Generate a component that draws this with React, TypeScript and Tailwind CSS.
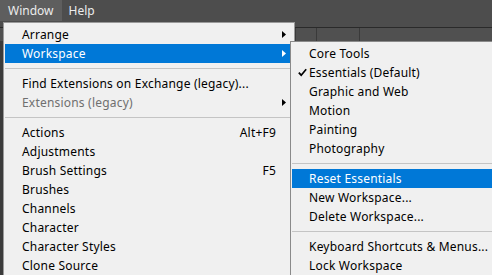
import React from "react";

type ItemProps = {
  label: string;
  shortcut?: string;
  arrow?: boolean;
  disabled?: boolean;
  active?: boolean;
  check?: boolean;
};

function Arrow({ white }: { white?: boolean }) {
  return (
    <svg width="4" height="7" viewBox="0 0 4 7" className="block">
      <path d="M0 0 L4 3.5 L0 7 Z" fill={white ? "#ffffff" : "#000000"} />
    </svg>
  );
}

function Check() {
  return (
    <svg width="9" height="9" viewBox="0 0 9 9" className="absolute left-[6px] top-[5px]">
      <path d="M0.8 4.6 L3.2 7.2 L8.2 1.2" stroke="#000" strokeWidth="1.7" fill="none" />
    </svg>
  );
}

function MainItem({ label, shortcut, arrow, disabled, active }: ItemProps) {
  return (
    <div
      className={
        "flex items-center h-[19px] pl-[17px] pr-[7px] " +
        (active ? "bg-[#0078d7] text-white" : disabled ? "text-[#6f6f6f]" : "text-black")
      }
    >
      <span className="flex-1 whitespace-nowrap pt-px">{label}</span>
      {shortcut && <span className="whitespace-nowrap pt-px">{shortcut}</span>}
      <span className="w-[10px] flex justify-end">{arrow && <Arrow white={active} />}</span>
    </div>
  );
}

function SubItem({ label, active, check }: ItemProps) {
  return (
    <div
      className={
        "relative flex items-center h-[19px] pl-[17px] " +
        (active ? "bg-[#0078d7] text-white" : "text-black")
      }
    >
      {check && <Check />}
      <span className="whitespace-nowrap pt-px">{label}</span>
    </div>
  );
}

function Sep() {
  return (
    <div className="h-[11px] flex items-center">
      <div className="h-px w-full bg-[#c4c4c4]" />
    </div>
  );
}

export default function App() {
  return (
    <div
      className="relative w-[492px] h-[275px] overflow-hidden bg-[#3b3b3b] text-[12px] leading-none tracking-[0.2px]"
      style={{ fontFamily: '"Noto Sans", "Noto Sans CJK KR", sans-serif' }}
    >
      {/* Menu bar */}
      <div className="h-[27px] bg-[#4d4d4d] flex items-start text-[#ececec] tracking-normal">
        <div className="h-[21px] px-[8px] flex items-center bg-[#5e5e5e]">Window</div>
        <div className="h-[21px] px-[7px] flex items-center">Help</div>
      </div>
      <div className="h-px bg-[#2a2a2a]" />
      {/* Options bar behind */}
      <div className="h-[13px] bg-[#505050] flex items-stretch pl-[295px]">
        <div className="w-px bg-[#3a3a3a]" />
        <div className="w-[20px]" />
        <div className="w-px bg-[#3a3a3a]" />
        <div className="w-[42px]" />
        <div className="w-px bg-[#3a3a3a]" />
      </div>

      {/* Main menu */}
      <div className="absolute left-[3px] top-[22px] w-[292px] bg-[#f0f0f0] border border-[#9a9a9a] pt-[2px] px-px">
        <MainItem label="Arrange" arrow />
        <MainItem label="Workspace" arrow active />
        <Sep />
        <MainItem label="Find Extensions on Exchange (legacy)..." />
        <MainItem label="Extensions (legacy)" arrow disabled />
        <Sep />
        <MainItem label="Actions" shortcut="Alt+F9" />
        <MainItem label="Adjustments" />
        <MainItem label="Brush Settings" shortcut="F5" />
        <MainItem label="Brushes" />
        <MainItem label="Channels" />
        <MainItem label="Character" />
        <MainItem label="Character Styles" />
        <MainItem label="Clone Source" />
      </div>

      {/* Workspace submenu */}
      <div className="absolute left-[290px] top-[41px] w-[230px] bg-[#f0f0f0] border border-[#8a8a8a] pt-[2px] px-px">
        <SubItem label="Core Tools" />
        <SubItem label="Essentials (Default)" check />
        <SubItem label="Graphic and Web" />
        <SubItem label="Motion" />
        <SubItem label="Painting" />
        <SubItem label="Photography" />
        <Sep />
        <SubItem label="Reset Essentials" active />
        <SubItem label="New Workspace..." />
        <SubItem label="Delete Workspace..." />
        <Sep />
        <SubItem label="Keyboard Shortcuts & Menus..." />
        <SubItem label="Lock Workspace" />
      </div>
    </div>
  );
}
